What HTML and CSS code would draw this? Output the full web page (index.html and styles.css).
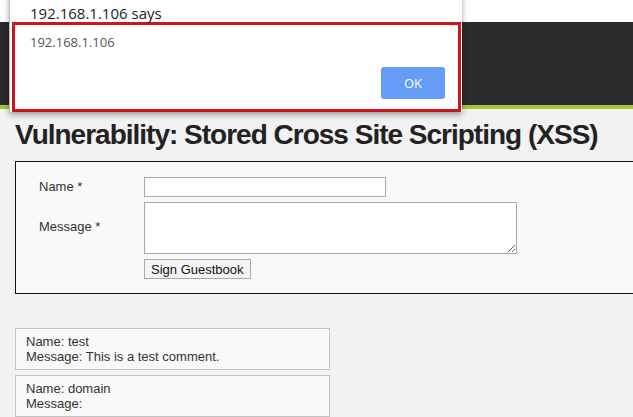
FILE: index.html
```html
<!DOCTYPE html>
<html>
<head>
<meta charset="utf-8">
<link rel="stylesheet" href="styles.css">
</head>
<body>
<div class="topstrip"></div>
<div class="header"></div>
<div class="main">
  <h1 class="title">Vulnerability: Stored Cross Site Scripting (XSS)</h1>
  <div class="formbox">
    <div class="row">
      <label class="lbl">Name *</label>
      <input class="inp" type="text">
    </div>
    <div class="row">
      <label class="lbl lbl-msg">Message *</label>
      <textarea class="ta"></textarea>
    </div>
    <div class="row">
      <span class="lbl"></span>
      <button class="btn">Sign Guestbook</button>
    </div>
  </div>
  <div class="comments">
    <div class="comment">Name: test<br>Message: This is a test comment.</div>
    <div class="comment">Name: domain<br>Message: </div>
  </div>
</div>
<div class="dialog">
  <div class="dlg-title">192.168.1.106 says</div>
  <div class="dlg-body">
    <div class="dlg-msg">192.168.1.106</div>
    <div class="dlg-actions"><button class="ok">OK</button></div>
  </div>
</div>
</body>
</html>
```
FILE: styles.css
```css
html, body { margin: 0; padding: 0; }
body {
  width: 633px;
  height: 417px;
  overflow: hidden;
  background: #f2f2f2;
  font-family: "Liberation Sans", Arial, sans-serif;
  color: #222;
  position: relative;
}
.topstrip { height: 22px; background: #fff; }
.header {
  height: 83px;
  background: #2b2b2b;
  border-bottom: 4px solid #a3c53a;
}
.main { padding: 0 0 0 15px; }
.title {
  margin: 0;
  padding-top: 10px;
  font-size: 28px;
  line-height: 32px;
  font-weight: bold;
  color: #222;
  letter-spacing: -1px;
}
.formbox {
  margin-top: 10px;
  border: 1px solid #111;
  border-right: none;
  background: #f9f9f9;
  padding: 15px 0 14px 23px;
  display: flex;
  flex-direction: column;
  gap: 5px;
}
.row { display: flex; align-items: flex-start; }
.lbl {
  width: 105px;
  font-size: 13px;
  color: #333;
  line-height: 20px;
}
.lbl-msg { padding-top: 15px; }
.inp {
  margin: 0;
  width: 242px;
  height: 20px;
  box-sizing: border-box;
  border: 1px solid #aaa;
  background: #fff;
}
.ta {
  margin: 0;
  width: 373px;
  height: 52px;
  box-sizing: border-box;
  border: 1px solid #aaa;
  background: #fff;
  resize: both;
}
.btn {
  margin: 0;
  height: 20px;
  padding: 0 6px;
  font-family: "Liberation Sans", Arial, sans-serif;
  font-size: 13px;
  color: #111;
  background: #f4f4f4;
  border: 1px solid #aaa;
  border-radius: 0;
}
.comments {
  margin-top: 34px;
  display: flex;
  flex-direction: column;
  gap: 5px;
}
.comment {
  width: 303px;
  border: 1px solid #c3c3c3;
  background: #f9f9f9;
  padding: 5px 0 5px 10px;
  font-size: 13px;
  line-height: 15px;
  color: #333;
}
.dialog {
  position: absolute;
  left: 9px;
  top: -10px;
  width: 452px;
  background: #fff;
  border-left: 1px solid #bbb;
  box-shadow: 0 3px 6px rgba(0,0,0,0.35);
  font-family: "Open Sans", "Noto Sans", sans-serif;
}
.dlg-title {
  padding: 12px 0 0 20px;
  height: 20px;
  font-size: 15px;
  line-height: 22px;
  color: #222;
}
.dlg-body {
  margin: 0 1px 0 2px;
  border: 3px solid #d0141c;
  height: 84px;
  box-sizing: content-box;
}
.dlg-msg {
  padding: 9px 0 0 15px;
  font-size: 13px;
  line-height: 17px;
  color: #555;
}
.dlg-actions {
  display: flex;
  justify-content: flex-end;
  padding: 16px 13px 0 0;
}
.ok {
  width: 64px;
  height: 32px;
  border: none;
  border-radius: 3px;
  background: #669df6;
  color: #fff;
  font-family: "Open Sans", "Noto Sans", sans-serif;
  font-size: 13px;
}
```
